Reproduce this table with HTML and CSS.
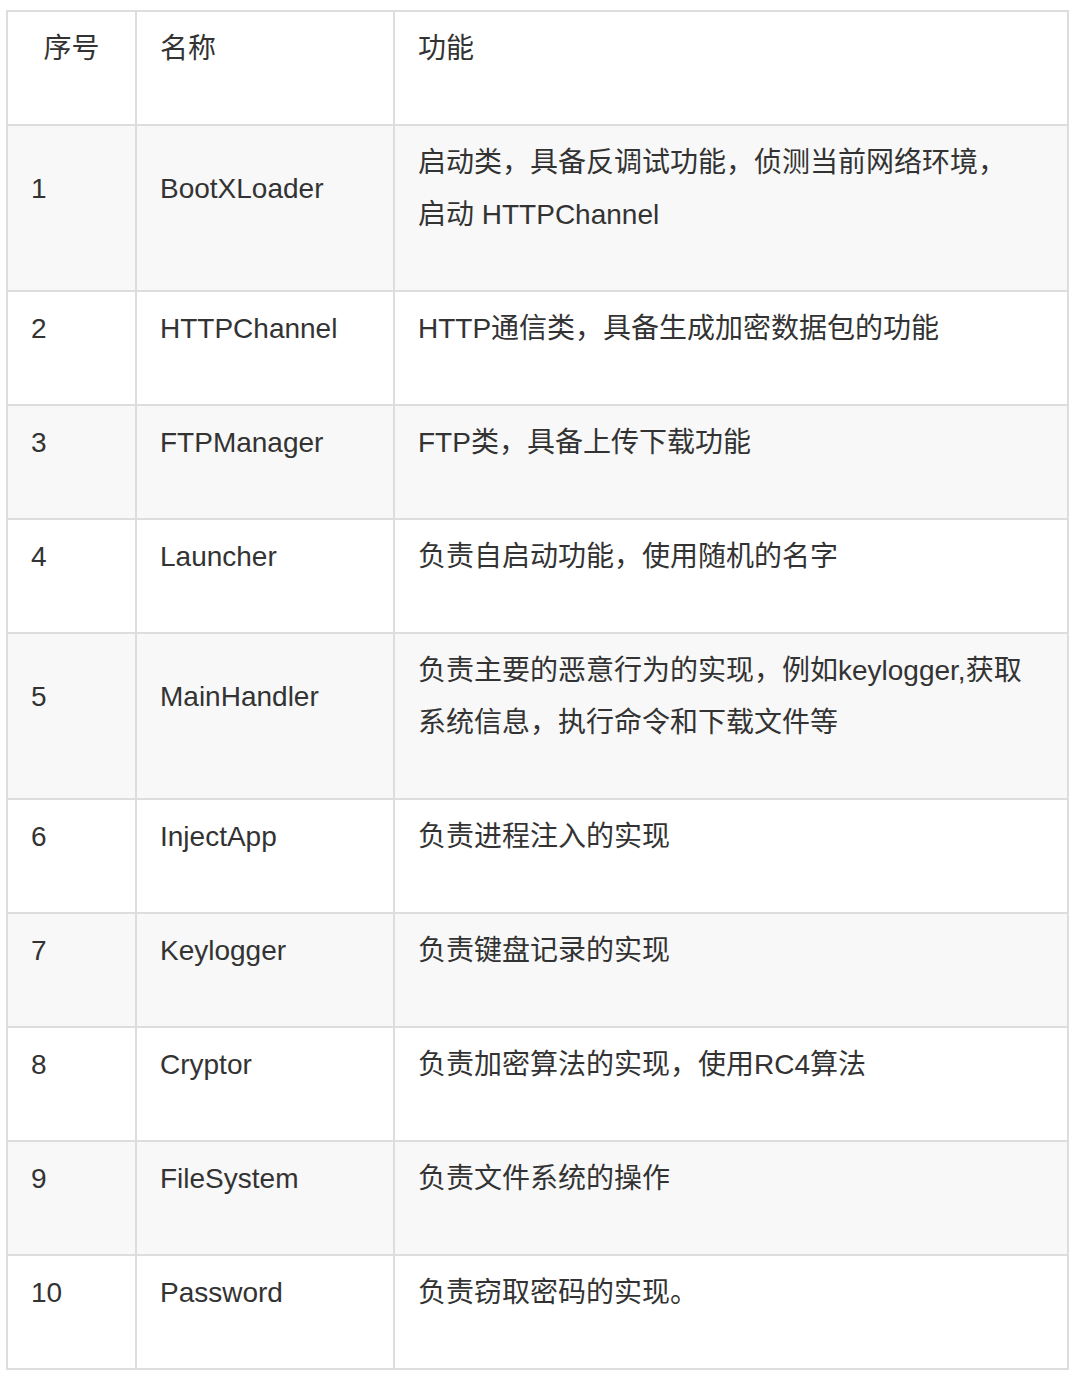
FILE: index.html
```html
<!DOCTYPE html>
<html lang="zh-CN">
<head>
<meta charset="utf-8">
<title>模块功能表</title>
<link rel="stylesheet" href="styles.css">
</head>
<body>
<table class="grid">
  <colgroup>
    <col class="c-no">
    <col class="c-name">
    <col class="c-func">
  </colgroup>
  <thead>
    <tr>
      <th class="no"><p>序号</p></th>
      <th><p>名称</p></th>
      <th><p>功能</p></th>
    </tr>
  </thead>
  <tbody>
    <tr class="odd"><td class="no"><p>1</p></td><td class="name"><p>BootXLoader</p></td><td class="func"><p>启动类，具备反调试功能，侦测当前网络环境，启动 HTTPChannel</p></td></tr>
    <tr><td class="no"><p>2</p></td><td class="name"><p>HTTPChannel</p></td><td class="func"><p>HTTP通信类，具备生成加密数据包的功能</p></td></tr>
    <tr class="odd"><td class="no"><p>3</p></td><td class="name"><p>FTPManager</p></td><td class="func"><p>FTP类，具备上传下载功能</p></td></tr>
    <tr><td class="no"><p>4</p></td><td class="name"><p>Launcher</p></td><td class="func"><p>负责自启动功能，使用随机的名字</p></td></tr>
    <tr class="odd"><td class="no"><p>5</p></td><td class="name"><p>MainHandler</p></td><td class="func"><p>负责主要的恶意行为的实现，例如keylogger,获取系统信息，执行命令和下载文件等</p></td></tr>
    <tr><td class="no"><p>6</p></td><td class="name"><p>InjectApp</p></td><td class="func"><p>负责进程注入的实现</p></td></tr>
    <tr class="odd"><td class="no"><p>7</p></td><td class="name"><p>Keylogger</p></td><td class="func"><p>负责键盘记录的实现</p></td></tr>
    <tr><td class="no"><p>8</p></td><td class="name"><p>Cryptor</p></td><td class="func"><p>负责加密算法的实现，使用RC4算法</p></td></tr>
    <tr class="odd"><td class="no"><p>9</p></td><td class="name"><p>FileSystem</p></td><td class="func"><p>负责文件系统的操作</p></td></tr>
    <tr><td class="no"><p>10</p></td><td class="name"><p>Password</p></td><td class="func"><p>负责窃取密码的实现。</p></td></tr>
  </tbody>
</table>
</body>
</html>
```

FILE: styles.css
```css
html, body {
  margin: 0;
  padding: 0;
  background: #ffffff;
}

body {
  padding: 10px 0 0 6px;
  font-family: "Liberation Sans", "Noto Sans CJK SC", sans-serif;
  font-size: 28px;
  line-height: 52px;
  color: #333333;
}

.grid {
  border-collapse: collapse;
  table-layout: fixed;
  width: 1061px;
}

.c-no { width: 129px; }
.c-name { width: 258px; }
.c-func { width: 674px; }

.grid th,
.grid td {
  border: 2px solid #dddddd;
  padding: 11px 10px 9px 23px;
  text-align: left;
  font-weight: normal;
  vertical-align: middle;
}

.grid th {
  vertical-align: top;
}

.grid th.no {
  text-align: center;
  padding-left: 10px;
}

.grid td.func {
  vertical-align: top;
  padding-right: 40px;
}

.grid p {
  margin: 0 0 40px 0;
}

.grid tr.odd td {
  background: #f8f8f8;
}
```
